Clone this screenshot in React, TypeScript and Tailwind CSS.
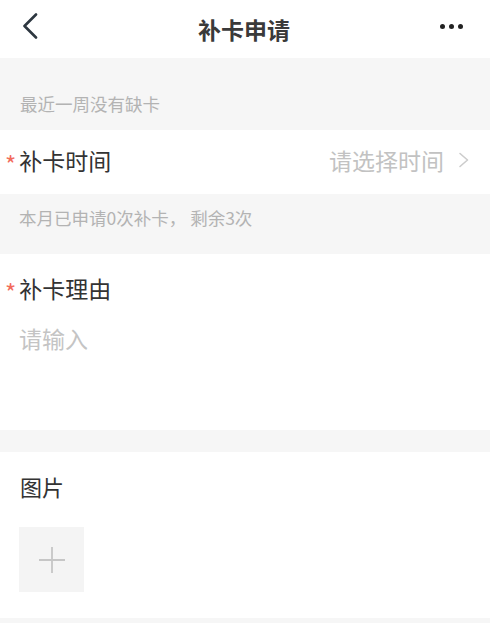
import React from 'react'

const FONT = { fontFamily: '"Noto Sans CJK SC", "Noto Sans", sans-serif' }

function Required() {
  return (
    <span className="mr-[3px] flex h-[28px] items-center text-[24px] leading-none text-[#f26b5b]">
      <span className="translate-y-[4px]">*</span>
    </span>
  )
}

export default function App() {
  return (
    <div className="flex min-h-[623px] w-[490px] flex-col bg-[#f6f6f6]" style={FONT}>
      {/* Header */}
      <div className="relative flex h-[58px] items-center justify-center bg-white">
        <svg className="absolute left-[21px] top-[13px]" width="18" height="26" viewBox="0 0 18 26" fill="none">
          <path d="M15 1.5 L3.5 13 L15 24.5" stroke="#2d3740" strokeWidth="2.6" strokeLinecap="round" strokeLinejoin="round" />
        </svg>
        <span className="translate-x-[-1px] text-[23px] font-semibold text-[#3a3a3a]">补卡申请</span>
        <div className="absolute right-[27px] top-[24px] flex gap-[4px]">
          <span className="h-[5px] w-[5px] rounded-full bg-[#222]" />
          <span className="h-[5px] w-[5px] rounded-full bg-[#222]" />
          <span className="h-[5px] w-[5px] rounded-full bg-[#222]" />
        </div>
      </div>

      {/* Missing card hint */}
      <div className="flex h-[72px] items-end px-[20px] pb-[14px]">
        <span className="text-[17.5px] leading-[24px] text-[#b3b3b3]">最近一周没有缺卡</span>
      </div>

      {/* Time row */}
      <div className="flex h-[64px] items-center bg-white pb-[4px] pl-[5px] pr-[20px]">
        <Required />
        <span className="text-[23px] leading-[28px] text-[#333]">补卡时间</span>
        <span className="ml-auto text-[23px] leading-[28px] text-[#c2c2c2]">请选择时间</span>
        <svg className="ml-[14px]" width="12" height="16" viewBox="0 0 12 16" fill="none">
          <path d="M2 1.5 L9.5 8 L2 14.5" stroke="#cccccc" strokeWidth="1.6" strokeLinecap="round" strokeLinejoin="round" />
        </svg>
      </div>

      {/* Count hint */}
      <div className="h-[60px] px-[19px] pt-[12px]">
        <span className="text-[17.5px] leading-[24px] text-[#b3b3b3]">本月已申请0次补卡， 剩余3次</span>
      </div>

      {/* Reason */}
      <div className="flex h-[176px] flex-col bg-white pl-[5px] pr-[20px] pt-[20px]">
        <div className="flex items-center">
          <Required />
          <span className="text-[23px] leading-[28px] text-[#333]">补卡理由</span>
        </div>
        <span className="ml-[14px] mt-[22px] text-[23px] leading-[28px] text-[#c4c4c4]">请输入</span>
      </div>

      <div className="h-[22px]" />

      {/* Pictures */}
      <div className="flex h-[166px] flex-col bg-white px-[19px] pt-[20px]">
        <span className="ml-[1px] text-[22px] leading-[28px] text-[#333]">图片</span>
        <div className="mt-[27px] flex h-[65px] w-[65px] items-center justify-center bg-[#f4f4f4]">
          <svg width="28" height="28" viewBox="0 0 28 28" fill="none">
            <path d="M14 1 V27 M1 14 H27" stroke="#c6c6c6" strokeWidth="1.8" />
          </svg>
        </div>
      </div>
    </div>
  )
}
